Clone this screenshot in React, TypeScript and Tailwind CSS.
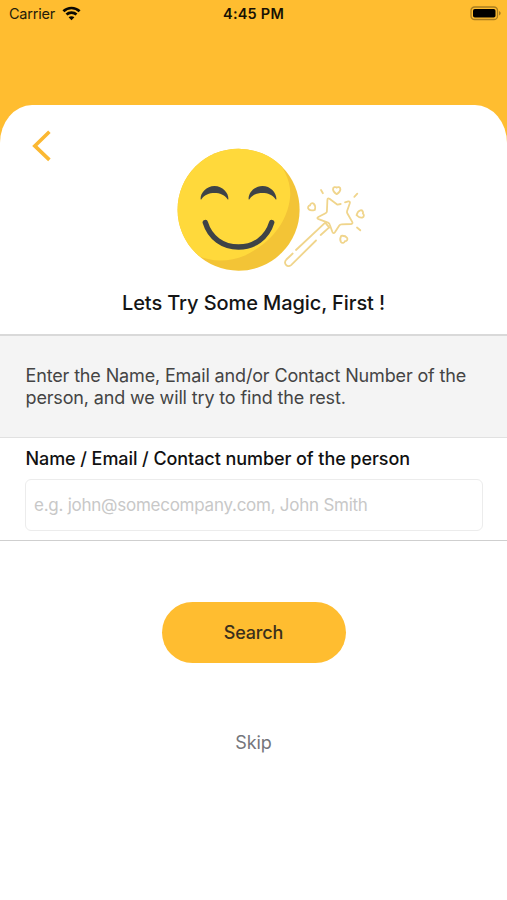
import React from "react";

function StatusBar() {
  return (
    <div className="grid h-[28px] grid-cols-3 items-center text-[14.5px] leading-none text-[#241c0a]">
      <div className="flex items-center gap-[5px] pl-[9px]">
        <span className="w-[48px] whitespace-nowrap tracking-[-0.015em]">Carrier</span>
        <svg className="-mt-[2px]" width="19" height="15" viewBox="0 0 19 15" fill="none" stroke="#0b0903" strokeWidth="2.7">
          <path d="M1.4 5.3C6 .9 13 .9 17.6 5.3" />
          <path d="M4.5 8.5C7.2 5.9 11.8 5.9 14.5 8.5" />
          <path d="M6.600 11.300c1.600-1.500 4.200-1.500 5.800 0l-2.900 2.900z" fill="#0b0903" stroke="none" />
        </svg>
      </div>
      <div className="text-center font-semibold whitespace-nowrap text-[#171104]">
        <span className="tracking-[0.015em]">4:45 PM</span>
      </div>
      <div className="flex justify-end pr-[6px]">
        <svg className="-mt-[2px]" width="31" height="15" viewBox="0 0 31 15" fill="none">
          <rect x="1" y="1" width="26.5" height="12.5" rx="3.6" stroke="#a87d20" strokeWidth="1.3" />
          <rect x="3" y="3" width="22.5" height="8.5" rx="1.8" fill="#000" />
          <path d="M29 5v4.5c1-.4 1.7-1.3 1.7-2.25S30 5.4 29 5z" fill="#a87d20" />
        </svg>
      </div>
    </div>
  );
}

function MagicArt() {
  return (
    <svg className="block" width="200" height="130" viewBox="170 145 200 130" fill="none">
      <defs>
        <clipPath id="face">
          <circle cx="238.6" cy="209.7" r="61" />
        </clipPath>
      </defs>
      <circle cx="238.6" cy="209.7" r="61" fill="#f3c436" />
      <path
        d="M273 155C284 167 292 183 290 198C287 224 269 244 245 255.500C228 262.500 211 262 196 255L170 275V140H273z"
        fill="#ffd93b"
        clipPath="url(#face)"
      />
      <g fill="#3e4347">
        <path d="M200.600 199c-.2-6.200 5.900-13 13.900-13s14.100 6.800 13.900 13c-.1.800-.6.800-1-.1-2.900-4.100-7.600-5.900-12.900-5.900s-10 1.800-12.900 5.900c-.4.900-.9.900-1 .1z" />
        <path d="M248.600 199c-.2-6.200 5.900-13 13.900-13s14.100 6.800 13.900 13c-.1.800-.6.800-1-.1-2.900-4.100-7.600-5.900-12.900-5.900s-10 1.800-12.900 5.900c-.4.900-.9.900-1 .1z" />
      </g>
      <path d="M205.300 222.500C210 238 223 247 238.500 247S267 238 271.700 222.500" stroke="#3e4347" strokeWidth="5.400" strokeLinecap="round" />
      <g stroke="#f0d58c" strokeWidth="1.800" strokeLinecap="round" strokeLinejoin="round">
        <path d="M340.700 204L337.500 204.700L329.500 198.800Q327.500 197.800 327.400 200L326.900 211.500Q326.800 212.600 325.500 213.300L318.300 217Q316.300 218.300 318.600 219.200L328 222.600Q329.200 223.100 329.600 224.300L332.400 232Q333.400 234.300 334.900 232.200L339.300 225.500Q340 224.400 341.300 224.400L351 224Q353.200 223.700 352.200 221.900L347.300 213.200Q346.700 212.200 347.100 211L349.800 203.300Q350.400 201.100 348.300 201.300L345 202.300" />
        <path d="M325.200 222.600L296 250M292.700 253.500l-6.300 6c-3.400 3.700.8 8.600 4.700 5.600L316 240.500M320.700 235l8.200-7.400M325.200 222.600l4.200 5" />
        <path d="M321 190l1.900 3.300M357.300 193.700l-3 3.200M357 227.500l3.300 2.800" />
        <path id="heart" d="M336.700 194.200c-1.900-1.100-3.700-2.900-3.700-4.900 0-2.300 2.500-2.700 3.700-1.600 1.200-1.100 3.700-.7 3.700 1.600 0 2-1.800 3.800-3.700 4.900z" />
        <use href="#heart" transform="translate(-24.700 16.900) rotate(-48 336.700 190.300)" />
        <use href="#heart" transform="translate(23.600 23.900) rotate(75 336.700 190.300)" />
        <use href="#heart" transform="translate(6.700 48.700) rotate(145 336.700 190.300)" />
      </g>
    </svg>
  );
}

export default function App() {
  return (
    <div className="flex h-[900px] w-[507px] flex-col overflow-hidden bg-[#ffbd30] font-['Inter','Liberation_Sans',sans-serif]">
      <StatusBar />
      <main className="mt-[77px] flex grow flex-col rounded-[32px_32px_0_0/38px_38px_0_0] bg-white">
        <header className="flex h-[229px] flex-col">
          <div className="flex pt-[25px]">
            <button className="ml-[31px] h-[32px] w-[20px] shrink-0" aria-label="Back">
              <svg width="20" height="32" viewBox="0 0 20 32" fill="none" stroke="#fbb832" strokeWidth="3.600">
                <path d="M18.400 1.800L3.800 15.900l14.600 14" />
              </svg>
            </button>
            <div className="mt-[15px] ml-[119px]">
              <MagicArt />
            </div>
          </div>
          <h1 className="mt-[16px] text-center text-[20px] leading-[24px] font-medium whitespace-nowrap text-[#151515]">
            <span className="tracking-[-0.005em]">Lets Try Some Magic, First !</span>
          </h1>
        </header>

        <section className="h-[104px] border-t-2 border-b border-t-[#d9d9d9] border-b-[#e1e1e1] bg-[#f4f4f4] pt-[29px] pl-[25.500px] text-[18px] leading-[22px] tracking-[-0.145px] whitespace-nowrap text-[#444]">
          <p>
            Enter the Name, Email and/or Contact Number of the
            <br />
            person, and we will try to find the rest.
          </p>
        </section>

        <section className="h-[103px] border-b border-[#cfcfcf] px-[25px] pt-[9px]">
          <label
            htmlFor="person"
            className="block pl-[0.500px] text-[18px] leading-[24px] font-medium tracking-[-0.075px] whitespace-nowrap text-[#111]"
          >
            Name / Email / Contact number of the person
          </label>
          <input
            id="person"
            placeholder="e.g. john@somecompany.com, John Smith"
            className="mt-[8px] block h-[52px] w-[458px] rounded-[6px] border border-[#ececec] bg-white px-[8px] text-[17px] tracking-[-0.250px] placeholder:text-[#c8c8c8]"
          />
        </section>

        <div className="flex flex-col items-center pt-[61px]">
          <button className="h-[61px] w-[184px] rounded-full bg-[#ffbd30] text-[18px] font-medium tracking-[-0.150px] text-[#3b301c]">
            Search
          </button>
          <button className="mt-[68px] h-[24px] text-[18px] leading-[24px] tracking-[-0.100px] text-[#74757b]">Skip</button>
        </div>
      </main>
    </div>
  );
}
